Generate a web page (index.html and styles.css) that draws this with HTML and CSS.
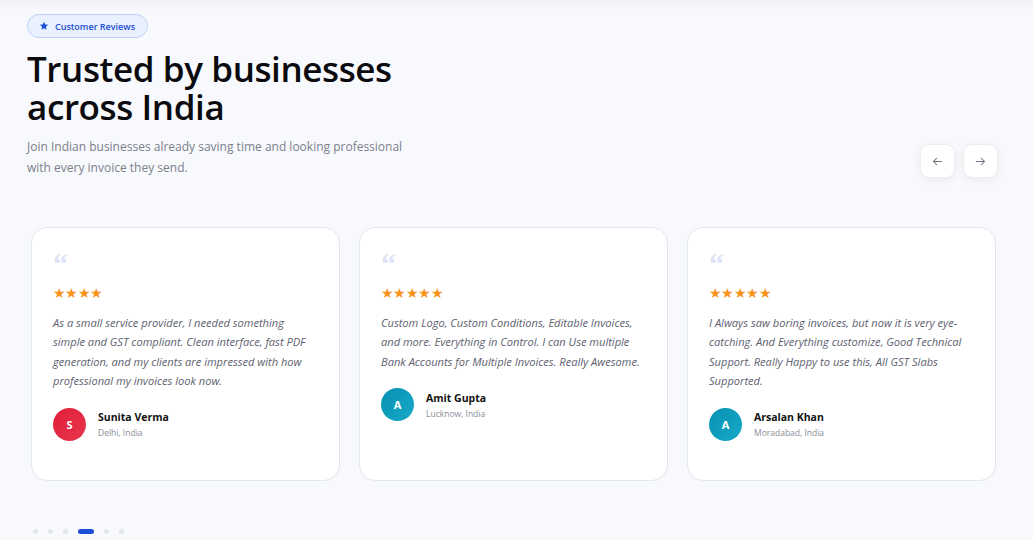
FILE: index.html
```html
<!DOCTYPE html>
<html lang="en">
<head>
    <meta charset="UTF-8">
    <meta name="viewport" content="width=device-width, initial-scale=1.0">
    <title>Customer Reviews</title>
    <link rel="stylesheet" href="styles.css">
</head>
<body>
    <section class="reviews">
        <div class="reviews-head">
            <div class="intro">
                <span class="badge">
                    <svg viewBox="0 0 24 24" width="10" height="10"><path d="M12 2l2.9 6.6 7.1.6-5.4 4.7 1.6 7L12 17.3 5.8 20.9l1.6-7L2 9.2l7.1-.6z" fill="#1d4ed8"/></svg>
                    Customer Reviews
                </span>
                <h1>Trusted by businesses across India</h1>
                <p class="lead">Join Indian businesses already saving time and looking professional with every invoice they send.</p>
            </div>
            <div class="nav-buttons">
                <button class="nav-btn" aria-label="Previous">
                    <svg viewBox="0 0 16 16" width="13" height="13"><path d="M13 8H3M7 4L3 8l4 4" fill="none" stroke="#6b7280" stroke-width="1.3" stroke-linecap="round" stroke-linejoin="round"/></svg>
                </button>
                <button class="nav-btn" aria-label="Next">
                    <svg viewBox="0 0 16 16" width="13" height="13"><path d="M3 8h10M9 4l4 4-4 4" fill="none" stroke="#6b7280" stroke-width="1.3" stroke-linecap="round" stroke-linejoin="round"/></svg>
                </button>
            </div>
        </div>

        <div class="cards">
            <article class="card">
                <div class="quote">&ldquo;</div>
                <div class="stars">★★★★</div>
                <p class="text">As a small service provider, I needed something simple and GST compliant. Clean interface, fast PDF generation, and my clients are impressed with how professional my invoices look now.</p>
                <div class="author">
                    <span class="avatar red">S</span>
                    <div>
                        <div class="name">Sunita Verma</div>
                        <div class="place">Delhi, India</div>
                    </div>
                </div>
            </article>
            <article class="card">
                <div class="quote">&ldquo;</div>
                <div class="stars">★★★★★</div>
                <p class="text">Custom Logo, Custom Conditions, Editable Invoices, and more. Everything in Control. I can Use multiple Bank Accounts for Multiple Invoices. Really Awesome.</p>
                <div class="author">
                    <span class="avatar teal">A</span>
                    <div>
                        <div class="name">Amit Gupta</div>
                        <div class="place">Lucknow, India</div>
                    </div>
                </div>
            </article>
            <article class="card">
                <div class="quote">&ldquo;</div>
                <div class="stars">★★★★★</div>
                <p class="text">I Always saw boring invoices, but now it is very eye-catching. And Everything customize, Good Technical Support. Really Happy to use this, All GST Slabs Supported.</p>
                <div class="author">
                    <span class="avatar teal">A</span>
                    <div>
                        <div class="name">Arsalan Khan</div>
                        <div class="place">Moradabad, India</div>
                    </div>
                </div>
            </article>
        </div>

        <div class="dots">
            <span class="dot"></span>
            <span class="dot"></span>
            <span class="dot"></span>
            <span class="dot active"></span>
            <span class="dot"></span>
            <span class="dot"></span>
        </div>
    </section>
</body>
</html>
```

FILE: styles.css
```css
body {
    margin: 0;
    background: #f8f9fc;
    font-family: "Open Sans", "Noto Sans", sans-serif;
    color: #111;
}

.reviews {
    padding: 14px 35px 0 27px;
    min-height: 540px;
    box-sizing: border-box;
    background: linear-gradient(#eef0f3, #f8f9fc 10px);
}

.reviews-head {
    display: flex;
    justify-content: space-between;
    align-items: flex-end;
}

.badge {
    display: inline-flex;
    align-items: center;
    gap: 6px;
    height: 24px;
    padding: 0 12px 0 11px;
    border: 1px solid #bfd3fb;
    background: #e9f0fe;
    border-radius: 12px;
    color: #1d4ed8;
    font-size: 9px;
    font-weight: 600;
    box-sizing: border-box;
}

h1 {
    margin: 12px 0 0;
    width: 420px;
    font-size: 35px;
    line-height: 38px;
    font-weight: 600;
    color: #0b0b0f;
    letter-spacing: -0.4px;
}

.lead {
    margin: 10px 0 0;
    width: 390px;
    font-size: 12px;
    line-height: 21px;
    color: #7b7f8c;
}

.nav-buttons {
    display: flex;
    gap: 8px;
}

.nav-btn {
    width: 35px;
    height: 34px;
    border: 1px solid #eceef2;
    border-radius: 9px;
    background: #fff;
    box-shadow: 0 2px 8px rgba(15, 23, 42, 0.06);
    display: flex;
    align-items: center;
    justify-content: center;
    padding: 0;
}

.cards {
    display: grid;
    grid-template-columns: repeat(3, 309px);
    gap: 19px;
    margin: 49px 0 0 4px;
}

.card {
    height: 254px;
    box-sizing: border-box;
    background: #fff;
    border: 1px solid #e3e6ec;
    border-radius: 16px;
    padding: 17px 21px 0 21px;
}

.quote {
    font-family: "Liberation Serif", serif;
    font-weight: 700;
    font-size: 30px;
    line-height: 30px;
    color: #e0e2f5;
    height: 30px;
    padding-top: 4px;
    box-sizing: border-box;
}

.stars {
    margin-top: 10px;
    color: #f7941d;
    font-size: 14px;
    letter-spacing: -0.6px;
    line-height: 16px;
}

.text {
    margin: 12px 0 0;
    font-size: 11.1px;
    line-height: 19.4px;
    font-style: italic;
    color: #5d6170;
}

.author {
    display: flex;
    align-items: center;
    gap: 12px;
    margin-top: 17px;
}

.avatar {
    width: 33px;
    height: 33px;
    border-radius: 50%;
    color: #fff;
    font-size: 11px;
    font-weight: 700;
    display: flex;
    align-items: center;
    justify-content: center;
}

.avatar.red {
    background: linear-gradient(135deg, #e11d38, #e8374f);
}

.avatar.teal {
    background: linear-gradient(135deg, #0891b2, #16a9c8);
}

.name {
    font-size: 10.5px;
    font-weight: 700;
    color: #111;
}

.place {
    margin-top: 3px;
    font-size: 8.5px;
    color: #8a8e99;
}

.dots {
    display: flex;
    align-items: center;
    gap: 10px;
    margin: 48px 0 0 6px;
}

.dot {
    width: 5px;
    height: 5px;
    border-radius: 50%;
    background: #e3e6ee;
}

.dot.active {
    width: 16px;
    height: 5px;
    border-radius: 3px;
    background: #1d4ed8;
}
```
